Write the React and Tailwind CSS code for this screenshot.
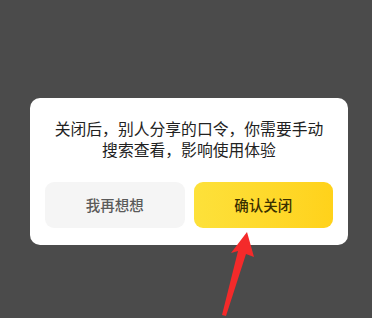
export default function App() {
  return (
    <div
      className="relative w-[372px] h-[318px] overflow-hidden bg-[#4b4b4b]"
      style={{ fontFamily: '"Noto Sans CJK SC", "Noto Sans", sans-serif' }}
    >
      <div className="pt-[98px] pl-[30px]">
        <div className="w-[318px] h-[147px] bg-white rounded-[10px] px-[12px] pt-[20px] pb-[17px] flex flex-col">
          <p className="text-center text-[15.8px] leading-[21px] text-[#222]">
            关闭后，别人分享的口令，你需要手动
            <br />
            搜索查看，影响使用体验
          </p>
          <div className="mt-auto px-[3px] flex gap-[9px]">
            <button className="flex-1 h-[46px] rounded-[9px] bg-[#f5f5f5] text-[14.5px] font-medium text-[#5a5a5a]">
              我再想想
            </button>
            <button className="flex-1 h-[46px] rounded-[9px] bg-gradient-to-r from-[#fde13a] to-[#ffd21a] text-[14.5px] font-medium text-[#3a3000]">
              确认关闭
            </button>
          </div>
        </div>
      </div>
      <svg className="absolute left-0 top-0" width="372" height="318" viewBox="0 0 372 318">
        <path
          d="M247 232 L254 257 L246 254 L226 316 L222 315 L238 251 L231 253 Z"
          fill="#f42a2a"
        />
      </svg>
    </div>
  );
}
